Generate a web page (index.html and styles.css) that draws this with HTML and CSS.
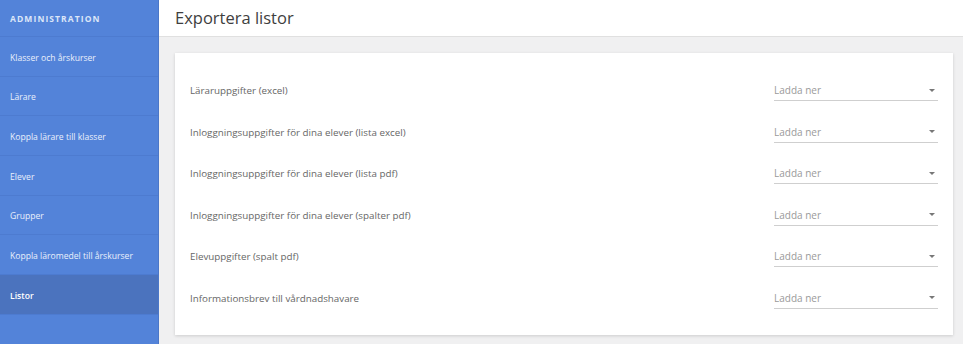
FILE: index.html
```html
<!DOCTYPE html>
<html>
  <head>
    <meta charset="UTF-8">
    <title>Exportera listor</title>
    <link rel="stylesheet" href="styles.css">
  </head>
  <body>
    <div class="layout">
      <nav class="sidebar">
        <div class="sidebar-title">ADMINISTRATION</div>
        <a class="nav-item" href="#">Klasser och årskurser</a>
        <a class="nav-item" href="#">Lärare</a>
        <a class="nav-item" href="#">Koppla lärare till klasser</a>
        <a class="nav-item" href="#">Elever</a>
        <a class="nav-item" href="#">Grupper</a>
        <a class="nav-item" href="#">Koppla läromedel till årskurser</a>
        <a class="nav-item active" href="#">Listor</a>
      </nav>
      <main class="main">
        <div class="page-header">
          <h1>Exportera listor</h1>
        </div>
        <div class="content">
          <div class="card">
            <div class="row">
              <span class="row-label">Läraruppgifter (excel)</span>
              <div class="select"><span>Ladda ner</span><span class="caret"></span></div>
            </div>
            <div class="row">
              <span class="row-label">Inloggningsuppgifter för dina elever (lista excel)</span>
              <div class="select"><span>Ladda ner</span><span class="caret"></span></div>
            </div>
            <div class="row">
              <span class="row-label">Inloggningsuppgifter för dina elever (lista pdf)</span>
              <div class="select"><span>Ladda ner</span><span class="caret"></span></div>
            </div>
            <div class="row">
              <span class="row-label">Inloggningsuppgifter för dina elever (spalter pdf)</span>
              <div class="select"><span>Ladda ner</span><span class="caret"></span></div>
            </div>
            <div class="row">
              <span class="row-label">Elevuppgifter (spalt pdf)</span>
              <div class="select"><span>Ladda ner</span><span class="caret"></span></div>
            </div>
            <div class="row">
              <span class="row-label">Informationsbrev till vårdnadshavare</span>
              <div class="select"><span>Ladda ner</span><span class="caret"></span></div>
            </div>
          </div>
        </div>
      </main>
    </div>
  </body>
</html>
```

FILE: styles.css
```css
body {
  margin: 0;
  background-color: #F0F0F1;
  font-family: "Open Sans", Arial, sans-serif;
}

.layout {
  display: flex;
  height: 344px;
  overflow: hidden;
}

.sidebar {
  width: 158px;
  flex-shrink: 0;
  background-color: #5383D9;
  border-right: 1px solid #4B77C8;
  display: flex;
  flex-direction: column;
}

.sidebar-title {
  height: 37px;
  line-height: 37px;
  padding-left: 10px;
  font-size: 8.5px;
  font-weight: bold;
  letter-spacing: 1.1px;
  color: #DCE6F8;
  border-bottom: 1px solid #4D7BD0;
  box-sizing: border-box;
}

.nav-item {
  display: block;
  height: 39.7px;
  padding-top: 1.5px;
  line-height: 39px;
  padding-left: 10px;
  font-size: 8.6px;
  color: #EAF0FB;
  text-decoration: none;
  border-bottom: 1px solid #4D7BD0;
  box-sizing: border-box;
}

.nav-item.active {
  background-color: #4B73BE;
  color: #FFFFFF;
  font-weight: 600;
}

.main {
  flex: 1;
  display: flex;
  flex-direction: column;
}

.page-header {
  height: 37px;
  background-color: #FFFFFF;
  border-bottom: 1px solid #E0E0E0;
  box-sizing: border-box;
  padding-left: 16px;
}

.page-header h1 {
  margin: 0;
  line-height: 36px;
  font-size: 16.5px;
  font-weight: normal;
  color: #3E3E3E;
}

.content {
  padding: 16px 10px 0 16px;
}

.card {
  background-color: #FFFFFF;
  box-shadow: 0 1px 3px rgba(0, 0, 0, 0.15);
  padding: 17px 15px 16px 15px;
}

.row {
  display: flex;
  align-items: center;
  justify-content: space-between;
  height: 41.5px;
}

.row-label {
  font-size: 9.8px;
  color: #666666;
}

.select {
  width: 164px;
  height: 20px;
  display: flex;
  align-items: center;
  justify-content: space-between;
  border-bottom: 1px solid #CFCFCF;
  font-size: 10px;
  color: #9A9A9A;
}

.caret {
  width: 0;
  height: 0;
  border-left: 3px solid transparent;
  border-right: 3px solid transparent;
  border-top: 3px solid #777777;
  margin-right: 3px;
}
```
